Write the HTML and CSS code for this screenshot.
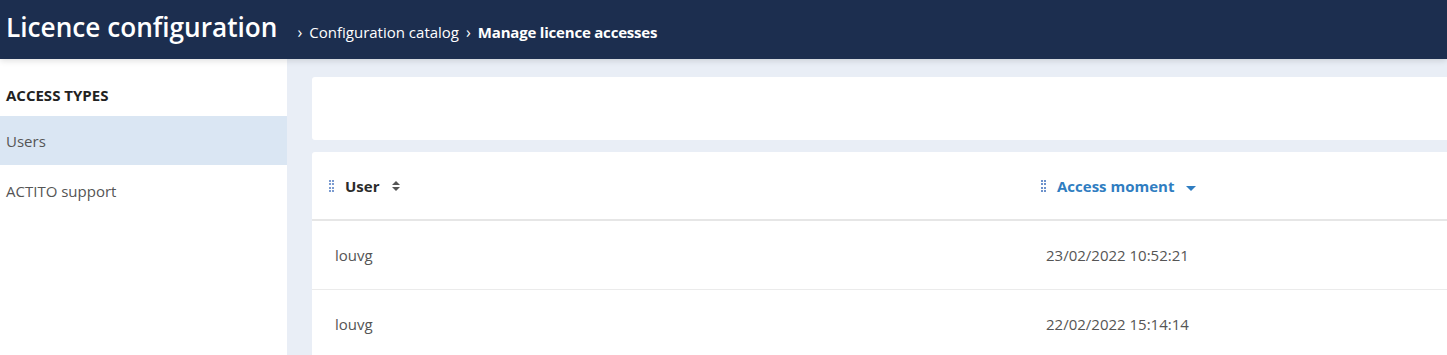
FILE: index.html
```html
<!DOCTYPE html>
<html>
<head>
    <title>Licence configuration</title>
    <link rel="stylesheet" href="styles.css">
</head>
<body>
    <header class="topbar">
        <h1 class="page-title">Licence configuration</h1>
        <nav class="crumbs">
            <span class="sep">&rsaquo;</span>
            <span>Configuration catalog</span>
            <span class="sep">&rsaquo;</span>
            <strong>Manage licence accesses</strong>
        </nav>
    </header>

    <div class="layout">
        <aside class="sidebar">
            <h3 class="side-title">ACCESS TYPES</h3>
            <a class="side-item active">Users</a>
            <a class="side-item">ACTITO support</a>
        </aside>

        <main class="content">
            <div class="card filters"></div>

            <div class="card grid">
                <div class="row head">
                    <div class="cell col-user">
                        <svg class="handle" width="5" height="12" viewBox="0 0 5 12">
                            <path d="M0 0h2v2H0zM3 0h2v2H3zM0 3h2v2H0zM3 3h2v2H3zM0 7h2v2H0zM3 7h2v2H3zM0 10h2v2H0zM3 10h2v2H3z" fill="#7b9bd0"/>
                        </svg>
                        <span class="label">User</span>
                        <svg class="sort" width="10" height="12" viewBox="0 0 10 12">
                            <path d="M1 5 L5 1 L9 5 Z M1 7 L5 11 L9 7 Z" fill="#555"/>
                        </svg>
                    </div>
                    <div class="cell col-date sorted">
                        <svg class="handle" width="5" height="12" viewBox="0 0 5 12">
                            <path d="M0 0h2v2H0zM3 0h2v2H3zM0 3h2v2H0zM3 3h2v2H3zM0 7h2v2H0zM3 7h2v2H3zM0 10h2v2H0zM3 10h2v2H3z" fill="#6d92cc"/>
                        </svg>
                        <span class="label">Access moment</span>
                        <svg class="sort down" width="10" height="6" viewBox="0 0 10 6">
                            <path d="M0 0 L10 0 L5 5 Z" fill="#2f7dc1"/>
                        </svg>
                    </div>
                </div>
                <div class="row">
                    <div class="cell col-user">louvg</div>
                    <div class="cell col-date">23/02/2022 10:52:21</div>
                </div>
                <div class="row">
                    <div class="cell col-user">louvg</div>
                    <div class="cell col-date">22/02/2022 15:14:14</div>
                </div>
            </div>
        </main>
    </div>
</body>
</html>
```

FILE: styles.css
```css
body { margin: 0; font-family: "Open Sans", sans-serif; color: #555; overflow: hidden; }

.topbar { height: 59px; background: #1c2e4f; color: #fff; display: flex; align-items: center; padding-left: 6px; box-shadow: 0 2px 6px rgba(0,0,0,0.12); position: relative; z-index: 1; }
.page-title { margin: 0 19px 0 0; font-size: 26.2px; font-weight: 600; position: relative; top: -3px; }
.crumbs { font-size: 15px; display: flex; align-items: center; gap: 6px; position: relative; top: 2px; }
.crumbs .sep { font-size: 16px; margin: 0 1px; }
.crumbs strong { font-weight: 700; letter-spacing: -0.2px; }

.layout { display: flex; height: 296px; }
.sidebar { width: 287px; background: #fff; flex-shrink: 0; }
.side-title { margin: 0; padding: 26px 6px 11px; font-size: 15px; font-weight: 700; color: #222; }
.side-item { display: block; height: 49px; line-height: 50px; padding-left: 6px; font-size: 15px; color: #555; }
.side-item.active { background: #dae6f3; }
.side-item + .side-item { line-height: 52px; }

.content { flex: 1; background: #e9eef6; padding: 18px 0 0 25px; display: flex; flex-direction: column; gap: 12px; min-width: 0; }
.card { background: #fff; border-radius: 3px 0 0 3px; flex-shrink: 0; }
.filters { height: 63px; }
.grid { flex: 1 0 auto; }

.row { display: flex; height: 68px; border-bottom: 1px solid #ebebeb; align-items: center; }
.row.head { height: 67px; border-bottom: 2px solid #e6e6e6; }
.cell { font-size: 15px; box-sizing: border-box; }
.col-user { width: 711px; padding-left: 23px; }
.col-date { flex: 1; padding-left: 23px; }

.head .cell { display: flex; align-items: center; font-weight: 700; color: #2b2b2b; }
.head .col-user { padding-left: 17px; }
.head .col-date { padding-left: 18px; }
.head .sorted { color: #2f7dc1; }
.handle { margin-right: 11px; flex-shrink: 0; }
.sort { margin-left: 12px; }
.sort.down { margin-left: 12px; position: relative; top: 3px; }
```
